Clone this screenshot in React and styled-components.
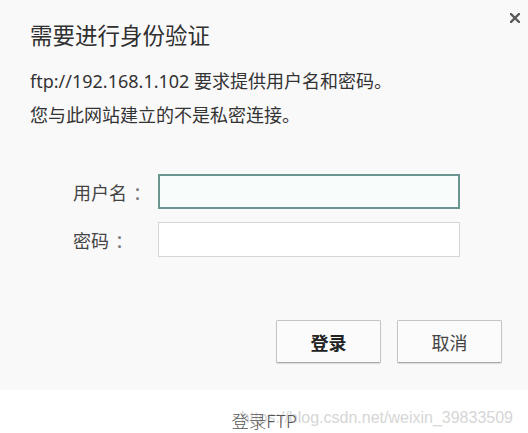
import React from "react";
import styled, { createGlobalStyle } from "styled-components";

const Global = createGlobalStyle`
  html, body { margin: 0; padding: 0; background: #ffffff; }
  body { font-family: "Noto Sans", "Noto Sans CJK SC", sans-serif; }
  * { box-sizing: border-box; }
`;

const Page = styled.div`
  width: 528px;
  height: 433px;
  display: flex;
  flex-direction: column;
  background: #ffffff;
`;

const Dialog = styled.div`
  height: 392px;
  background: #faf9fa;
  display: flex;
  flex-direction: column;
  padding: 0 26px 0 30px;
`;

const Header = styled.div`
  display: flex;
  justify-content: space-between;
  align-items: flex-start;
  height: 64px;
`;

const Title = styled.h1`
  margin: 19px 0 0;
  font-size: 22.5px;
  font-weight: 400;
  line-height: 30px;
  color: #303030;
  font-family: "Noto Sans CJK SC", sans-serif;
`;

const Close = styled.button`
  border: 0;
  background: none;
  padding: 0;
  margin: 12px -19px 0 0;
  width: 12px;
  height: 12px;
  display: flex;
  align-items: center;
  justify-content: center;
`;

const Message = styled.p`
  margin: 0;
  font-size: 18px;
  line-height: 34px;
  color: #333;
  font-family: "Noto Sans", "Noto Sans CJK SC", sans-serif;
`;

const Form = styled.div`
  margin: 42px 0 0 43px;
  display: flex;
  flex-direction: column;
  gap: 13px;
`;

const Row = styled.div`
  display: flex;
  align-items: center;
  height: 35px;
`;

const Label = styled.label`
  width: 85px;
  font-size: 18px;
  color: #444;
  font-family: "Noto Sans CJK SC", sans-serif;
  display: flex;
  gap: 6px;
`;

const Colon = styled.span`
  color: #777;
`;

const Input = styled.input`
  width: 302px;
  height: 35px;
  margin: 0;
  padding: 0 6px;
  font-size: 16px;
  outline: none;
  border: ${(p) => (p.$focused ? "2px solid #6b9590" : "1px solid #d6d6d6")};
  background: ${(p) => (p.$focused ? "#f8fdfc" : "#ffffff")};
  border-radius: 0;
`;

const Actions = styled.div`
  margin-top: 63px;
  display: flex;
  justify-content: flex-end;
  gap: 16px;
`;

const Button = styled.button`
  width: 105px;
  height: 43px;
  margin: 0;
  border: 1px solid #c4c4c4;
  border-bottom-color: #aaa;
  box-shadow: 0 1px 1px rgba(0, 0, 0, 0.12);
  border-radius: 2px;
  background: #fbfbfb;
  font-size: 18px;
  font-family: "Noto Sans CJK SC", sans-serif;
  font-weight: ${(p) => (p.$primary ? 700 : 400)};
  color: ${(p) => (p.$primary ? "#222" : "#444")};
`;

const Caption = styled.div`
  position: relative;
  flex: 1;
  display: flex;
  justify-content: center;
  align-items: center;
  padding-top: 18px;
`;

const CaptionText = styled.span`
  position: relative;
  font-size: 17.5px;
  font-weight: 300;
  color: #555;
  font-family: "Noto Sans CJK SC", sans-serif;
  z-index: 1;
`;

const Watermark = styled.span`
  position: absolute;
  right: 15px;
  top: 19px;
  font-size: 16px;
  font-family: "Liberation Sans", sans-serif;
  color: #d6d6d6;
  white-space: nowrap;
`;

export default function App() {
  return (
    <Page>
      <Global />
      <Dialog>
        <Header>
          <Title>需要进行身份验证</Title>
          <Close aria-label="关闭">
            <svg width="10" height="10" viewBox="0 0 10 10">
              <path d="M1 1 L9 9 M9 1 L1 9" stroke="#5a5a5a" strokeWidth="2.4" strokeLinecap="square" />
            </svg>
          </Close>
        </Header>
        <Message>ftp://192.168.1.102 要求提供用户名和密码。</Message>
        <Message>您与此网站建立的不是私密连接。</Message>
        <Form>
          <Row>
            <Label>用户名<Colon>：</Colon></Label>
            <Input $focused />
          </Row>
          <Row>
            <Label>密码<Colon>：</Colon></Label>
            <Input type="password" />
          </Row>
        </Form>
        <Actions>
          <Button $primary>登录</Button>
          <Button>取消</Button>
        </Actions>
      </Dialog>
      <Caption>
        <Watermark>https://blog.csdn.net/weixin_39833509</Watermark>
        <CaptionText>登录FTP</CaptionText>
      </Caption>
    </Page>
  );
}
